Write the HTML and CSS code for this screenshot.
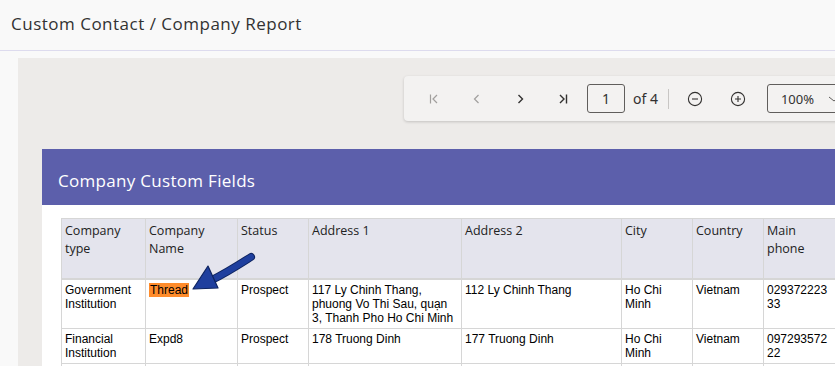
FILE: index.html
```html
<!DOCTYPE html>
<html>
<head>
<meta charset="utf-8">
<link rel="stylesheet" href="styles.css">
</head>
<body>
<header class="topbar"><h1 class="title">Custom Contact / Company Report</h1></header>
<main class="main">
  <div class="viewer">
    <div class="toolbar">
      <button class="tb-btn disabled" aria-label="First page"><svg width="16" height="16" viewBox="0 0 16 16"><path d="M4.5 3.5v9M11 4 7 8l4 4" fill="none" stroke="currentColor" stroke-width="1.2"/></svg></button>
      <button class="tb-btn disabled" aria-label="Previous page"><svg width="16" height="16" viewBox="0 0 16 16"><path d="M9.5 4 5.5 8l4 4" fill="none" stroke="currentColor" stroke-width="1.2"/></svg></button>
      <button class="tb-btn" aria-label="Next page"><svg width="16" height="16" viewBox="0 0 16 16"><path d="M6.5 4l4 4-4 4" fill="none" stroke="currentColor" stroke-width="1.4"/></svg></button>
      <button class="tb-btn" aria-label="Last page"><svg width="16" height="16" viewBox="0 0 16 16"><path d="M5 4l4 4-4 4M11.5 3.5v9" fill="none" stroke="currentColor" stroke-width="1.4"/></svg></button>
      <div class="page-box">1</div>
      <span class="page-of">of 4</span>
      <span class="sep"></span>
      <button class="tb-btn zoom" aria-label="Zoom out"><svg width="18" height="18" viewBox="0 0 18 18"><circle cx="9" cy="9" r="6.6" fill="none" stroke="currentColor" stroke-width="1.1"/><path d="M6 9h6" stroke="currentColor" stroke-width="1.1"/></svg></button>
      <button class="tb-btn zoom" aria-label="Zoom in"><svg width="18" height="18" viewBox="0 0 18 18"><circle cx="9" cy="9" r="6.6" fill="none" stroke="currentColor" stroke-width="1.1"/><path d="M6 9h6M9 6v6" stroke="currentColor" stroke-width="1.1"/></svg></button>
      <div class="zoom-select"><span>100%</span><svg width="14" height="10" viewBox="0 0 14 10"><path d="M2 3l5 4 5-4" fill="none" stroke="currentColor" stroke-width="1"/></svg></div>
    </div>
    <section class="report">
      <h2 class="report-title">Company Custom Fields</h2>
      <div class="report-body">
        <table class="grid">
          <colgroup>
            <col class="c1"><col class="c2"><col class="c3"><col class="c4"><col class="c5"><col class="c6"><col class="c7"><col class="c8">
          </colgroup>
          <thead>
            <tr><th>Company type</th><th>Company Name</th><th>Status</th><th>Address 1</th><th>Address 2</th><th>City</th><th>Country</th><th>Main phone</th></tr>
          </thead>
          <tbody>
            <tr class="r1"><td>Government Institution</td><td><span class="hl">Thread</span></td><td>Prospect</td><td>117 Ly Chinh Thang, phuong Vo Thi Sau, quạn 3, Thanh Pho Ho Chi Minh</td><td>112 Ly Chinh Thang</td><td>Ho Chi Minh</td><td>Vietnam</td><td>029372223<br>33</td></tr>
            <tr class="r2"><td>Financial Institution</td><td>Expd8</td><td>Prospect</td><td>178 Truong Dinh</td><td>177 Truong Dinh</td><td>Ho Chi Minh</td><td>Vietnam</td><td>097293572<br>22</td></tr>
            <tr class="r3"><td></td><td></td><td></td><td></td><td></td><td></td><td></td><td></td></tr>
          </tbody>
        </table>
      </div>
    </section>
  </div>
</main>
<svg class="callout" width="80" height="50" viewBox="0 0 80 50" aria-hidden="true">
  <path d="M71 6 C60 13 48 21 30 30" fill="none" stroke="#0e2460" stroke-width="8" stroke-linecap="round"/>
  <path d="M71 6 C60 13 48 21 30 30" fill="none" stroke="#1f3f9e" stroke-width="6" stroke-linecap="round"/>
  <path d="M28 15 L13 38 L38 37 Z" fill="#1f3f9e" stroke="#0e2460" stroke-width="1.2" stroke-linejoin="round"/>
</svg>
</body>
</html>
```

FILE: styles.css
```css
html, body {
  margin: 0;
  padding: 0;
}
body {
  background: #f9f9f9;
  width: 835px;
  height: 366px;
  overflow: hidden;
  position: relative;
  font-family: "Open Sans", "Noto Sans", sans-serif;
}
.topbar {
  height: 51px;
  border-bottom: 1px solid #dddbee;
  box-sizing: border-box;
  display: flex;
  align-items: center;
  padding-left: 11px;
}
.title {
  margin: 0;
  font-size: 17px;
  font-weight: 400;
  color: #323232;
  letter-spacing: 0.5px;
  padding-bottom: 4px;
}
.main {
  padding: 7px 0 0 18px;
}
.viewer {
  background: #edebe9;
  padding-top: 18px;
  height: 320px;
  overflow: hidden;
}
.toolbar {
  margin-left: 386px;
  width: 520px;
  height: 45px;
  background: #f3f2f1;
  border-radius: 4px;
  box-shadow: 0 1px 3px rgba(0,0,0,0.18);
  display: flex;
  align-items: center;
  padding-left: 20px;
  box-sizing: border-box;
}
.tb-btn {
  border: 0;
  background: transparent;
  padding: 0;
  width: 20px;
  height: 20px;
  margin-right: 23px;
  display: flex;
  align-items: center;
  justify-content: center;
  color: #323130;
}
.tb-btn.disabled {
  color: #a19f9d;
}
.tb-btn:nth-child(4) { margin-right: 14px; }
.page-box {
  width: 38px;
  height: 29px;
  box-sizing: border-box;
  border: 1px solid #605e5c;
  border-radius: 3px;
  display: flex;
  align-items: center;
  justify-content: center;
  font-size: 14px;
  color: #323130;
  font-family: "Noto Sans", sans-serif;
}
.page-of {
  margin-left: 8px;
  font-size: 14px;
  color: #323130;
  font-family: "Noto Sans", sans-serif;
}
.sep {
  width: 1px;
  height: 20px;
  background: #c8c6c4;
  margin: 0 16px 0 10px;
}
.tb-btn.zoom {
  margin-right: 23px;
}
.tb-btn.zoom + .tb-btn.zoom {
  margin-right: 19px;
}
.zoom-select {
  width: 90px;
  height: 29px;
  box-sizing: border-box;
  border: 1px solid #605e5c;
  border-radius: 3px;
  display: flex;
  align-items: center;
  padding-left: 13px;
  font-size: 13px;
  color: #323130;
  font-family: "Noto Sans", sans-serif;
  gap: 13px;
}
.zoom-select svg { color: #605e5c; }
.report {
  margin: 28px 0 0 24px;
  background: #fff;
  width: 900px;
}
.report-title {
  margin: 0;
  height: 56px;
  background: #5c5fab;
  color: #fff;
  font-size: 17px;
  font-weight: 400;
  display: flex;
  align-items: center;
  padding-left: 16px;
  padding-top: 7px;
  box-sizing: border-box;
  letter-spacing: 0.3px;
}
.report-body {
  padding: 13px 0 0 19px;
}
.grid {
  border-collapse: collapse;
  table-layout: fixed;
  width: 774px;
}
.c1 { width: 84px; }
.c2 { width: 92px; }
.c3 { width: 71px; }
.c4 { width: 153px; }
.c5 { width: 160px; }
.c6 { width: 71px; }
.c7 { width: 71px; }
.c8 { width: 72px; }
.grid th, .grid td {
  border: 1px solid #d6d6d6;
  vertical-align: top;
  text-align: left;
  padding: 3px 3px 3px 3px;
}
.grid th {
  background: #e4e4ed;
  font-weight: 400;
  font-size: 12.5px;
  line-height: 18px;
  color: #222;
  height: 53px;
  border-bottom: 2px solid #d6d6d6;
  padding-top: 3px;
}
.grid td {
  font-family: "Liberation Sans", Arial, sans-serif;
  font-size: 12px;
  line-height: 14px;
  color: #000;
}
.r1 td { height: 40px; padding-top: 3px; }
.r2 td { height: 28px; }
.hl {
  background: #ff8c2b;
  padding: 0 1px;
}
.callout {
  position: absolute;
  left: 180px;
  top: 251px;
}
```
